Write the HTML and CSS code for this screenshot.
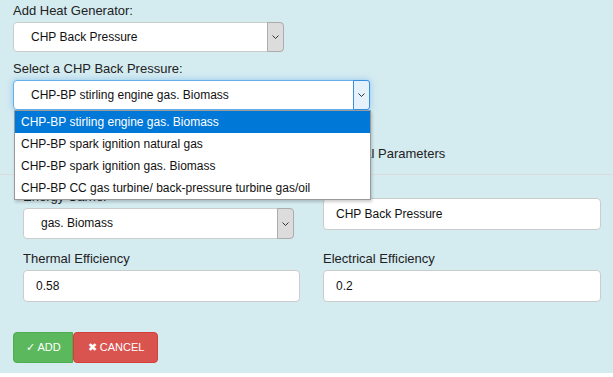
FILE: index.html
```html
<!DOCTYPE html>
<html lang="en">
<head>
    <meta charset="UTF-8">
    <meta name="viewport" content="width=device-width, initial-scale=1.0">
    <title>Add Heat Generator</title>
    <link rel="stylesheet" href="styles.css">
</head>
<body>
    <div class="panel">
        <label class="field-label">Add Heat Generator:</label>
        <div class="select select-gen">
            <span class="select-value">CHP Back Pressure</span>
            <span class="select-arrow"><svg width="7" height="4" viewBox="0 0 7 4"><polyline points="0.5,0.5 3.5,3.5 6.5,0.5" fill="none" stroke="#333" stroke-width="1"/></svg></span>
        </div>

        <label class="field-label second">Select a CHP Back Pressure:</label>
        <div class="select select-type is-open">
            <span class="select-value">CHP-BP stirling engine gas. Biomass</span>
            <span class="select-arrow"><svg width="7" height="4" viewBox="0 0 7 4"><polyline points="0.5,0.5 3.5,3.5 6.5,0.5" fill="none" stroke="#333" stroke-width="1"/></svg></span>
            <ul class="select-options">
                <li class="selected">CHP-BP stirling engine gas. Biomass</li>
                <li>CHP-BP spark ignition natural gas</li>
                <li>CHP-BP spark ignition gas. Biomass</li>
                <li>CHP-BP CC gas turbine/ back-pressure turbine gas/oil</li>
            </ul>
        </div>

        <ul class="tabs">
            <li>General</li>
            <li>Economical Parameters</li>
            <li>Technical Parameters</li>
        </ul>

        <div class="tab-content">
            <div class="form-grid">
                <div class="form-group">
                    <label class="field-label">Energy Carrier</label>
                    <div class="select select-carrier">
                        <span class="select-value">gas. Biomass</span>
                        <span class="select-arrow"><svg width="7" height="4" viewBox="0 0 7 4"><polyline points="0.5,0.5 3.5,3.5 6.5,0.5" fill="none" stroke="#333" stroke-width="1"/></svg></span>
                    </div>
                </div>
                <div class="form-group name-group">
                    <div class="input">CHP Back Pressure</div>
                </div>
                <div class="form-group">
                    <label class="field-label">Thermal Efficiency</label>
                    <div class="input">0.58</div>
                </div>
                <div class="form-group">
                    <label class="field-label">Electrical Efficiency</label>
                    <div class="input">0.2</div>
                </div>
            </div>
        </div>

        <div class="actions">
            <button class="btn btn-add">&#10003; ADD</button>
            <button class="btn btn-cancel">&#10006; CANCEL</button>
        </div>
    </div>
</body>
</html>
```

FILE: styles.css
```css
body {
    margin: 0;
    background: #fff;
    font-family: "Liberation Sans", Arial, sans-serif;
    color: #222;
}
.panel {
    box-sizing: border-box;
    height: 373px;
    padding: 3px 0 0 13px;
    background: #d4ebf0;
}
.field-label {
    display: block;
    font-size: 13px;
    line-height: 16px;
    margin-bottom: 3px;
}
.field-label.second { margin-top: 9px; }

.select {
    position: relative;
    box-sizing: border-box;
    display: flex;
    height: 30px;
    background: white;
    border: 1px solid #ccc;
    border-radius: 4px;
    font-size: 12px;
    color: #111;
}
.select-value {
    flex: 1;
    padding-left: 17px;
    line-height: 28px;
    white-space: nowrap;
}
.select-arrow {
    display: flex;
    align-items: center;
    justify-content: center;
    width: 15px;
    margin: -1px -1px -1px 0;
    background: #dcdcdc;
    border: 1px solid #acacac;
    border-radius: 0 4px 4px 0;
}
.select-gen { width: 271px; }
.select-type {
    width: 357px;
    border-color: #66afe9;
    box-shadow: 0 0 6px rgba(102, 175, 233, 0.6);
}
.select-type .select-arrow {
    background: #e5f1fb;
    border-color: #3a8ee0;
    border-radius: 0 3px 3px 0;
}
.select-options {
    position: absolute;
    top: calc(100% + 1px);
    left: 0;
    z-index: 5;
    box-sizing: border-box;
    width: 357px;
    margin: 0;
    padding: 0;
    list-style: none;
    background: white;
    border: 1px solid #9a9a9a;
    box-shadow: 1px 2px 3px rgba(0,0,0,0.2);
}
.select-options li {
    height: 22px;
    line-height: 22px;
    padding-left: 6px;
    font-size: 12px;
    color: #111;
}
.select-options li.selected {
    background: #0078d7;
    color: white;
}

.tabs {
    display: flex;
    margin: 24px 0 0 -13px;
    padding: 0 0 0 13px;
    list-style: none;
    border-bottom: 1px solid #dcdcdc;
}
.tabs li {
    padding: 10px 15px;
    line-height: 20px;
    font-size: 13px;
    margin-right: 24px;
}

.tab-content {
    padding: 14px 12px 0 10px;
}
.form-grid {
    display: grid;
    grid-template-columns: 277px 278px;
    column-gap: 23px;
    row-gap: 12px;
}
.name-group { padding-top: 9px; }
.select-carrier { width: 271px; height: 31px; }
.select-carrier .select-value { line-height: 29px; }
.input {
    box-sizing: border-box;
    height: 32px;
    padding-left: 12px;
    line-height: 30px;
    background: white;
    border: 1px solid #ccc;
    border-radius: 4px;
    font-size: 12px;
    color: #111;
}

.actions {
    display: flex;
    margin-top: 30px;
}
.btn {
    box-sizing: border-box;
    height: 31px;
    padding: 0 13px 0 14px;
    border: 1px solid;
    border-radius: 4px;
    color: white;
    font-family: "Liberation Sans", Arial, sans-serif;
    font-size: 11px;
    cursor: pointer;
}
.btn-add {
    padding: 0 11px 0 12px;
    background: #5cb85c;
    border-color: #4cae4c;
    border-radius: 4px 0 0 4px;
}
.btn-cancel {
    background: #d9534f;
    border-color: #d43f3a;
}
```
